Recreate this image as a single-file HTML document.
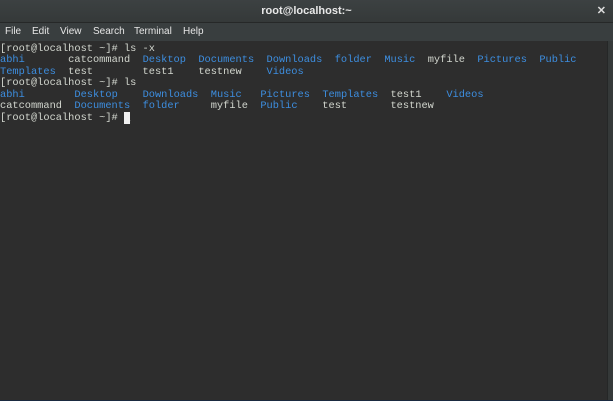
<!DOCTYPE html>
<html><head><meta charset="utf-8"><style>
html,body{margin:0;padding:0;width:613px;height:401px;overflow:hidden;background:#2d2d2d;font-family:"Liberation Sans",sans-serif}
#title{position:absolute;left:0;top:0;width:613px;height:22px;background:linear-gradient(#3c4142,#353939);border-bottom:1px solid #262828;color:#e8e8e8;font-size:11px;font-weight:bold;text-align:center;line-height:23px}
#close{position:absolute;right:7px;top:0;font-size:11px;color:#ddd}
#menu{position:absolute;left:0;top:23px;width:613px;height:18px;background:#393e3f;border-bottom:1px solid #2a2c2d;color:#e6e6e6;font-size:10px;line-height:18px}
#menu span{position:absolute;top:0}
#term{position:absolute;left:0;top:41px;width:607px;height:359px;background:#2d2d2d}
#sb{position:absolute;left:607px;top:41px;width:6px;height:359px;background:#353939;border-left:1px solid #252727}
pre{margin:0;position:absolute;left:0;top:3px;font-family:"Liberation Mono",monospace;font-size:10.33px;line-height:11.45px;color:#d3d7cf}
.b{color:#3d8ee0}
.cur{background:#f0f0f0;color:#f0f0f0}
#bot{position:absolute;left:0;top:400px;width:613px;height:1px;background:#1a2a40}
</style></head><body>
<div id="title">root@localhost:~<span id="close">✕</span></div>
<div id="menu"><span style="left:5px">File</span><span style="left:32px">Edit</span><span style="left:60px">View</span><span style="left:93px">Search</span><span style="left:134px">Terminal</span><span style="left:183px">Help</span></div>
<div id="term"><pre>[root@localhost ~]# ls -x
<span class="b">abhi</span>       catcommand  <span class="b">Desktop</span>  <span class="b">Documents</span>  <span class="b">Downloads</span>  <span class="b">folder</span>  <span class="b">Music</span>  myfile  <span class="b">Pictures</span>  <span class="b">Public</span>
<span class="b">Templates</span>  test        test1    testnew    <span class="b">Videos</span>
[root@localhost ~]# ls
<span class="b">abhi</span>        <span class="b">Desktop</span>    <span class="b">Downloads</span>  <span class="b">Music</span>   <span class="b">Pictures</span>  <span class="b">Templates</span>  test1    <span class="b">Videos</span>
catcommand  <span class="b">Documents</span>  <span class="b">folder</span>     myfile  <span class="b">Public</span>    test       testnew
[root@localhost ~]# <span class="cur">_</span></pre></div>
<div id="sb"></div>
<div id="bot"></div>
</body></html>
